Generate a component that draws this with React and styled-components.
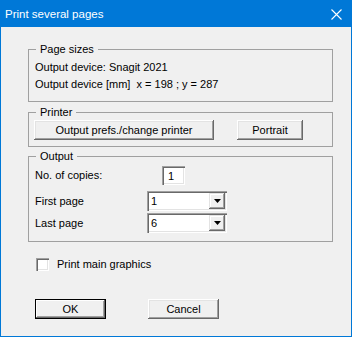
import styled, { createGlobalStyle } from 'styled-components';

const GlobalStyle = createGlobalStyle`
    html, body {
        margin: 0;
        padding: 0;
        background: #f0f0f0;
    }
    body {
        font-family: 'Liberation Sans', Arial, sans-serif;
        font-size: 11px;
        color: #000;
    }
`;

const Window = styled.div`
    width: 352px;
    height: 337px;
    box-sizing: border-box;
    border: 1px solid #0078d7;
    border-top: none;
    background: #f0f0f0;
    display: flex;
    flex-direction: column;
`;

const TitleBar = styled.div`
    height: 27px;
    flex-shrink: 0;
    background: #0078d7;
    display: flex;
    align-items: center;
    justify-content: space-between;
    padding-left: 4px;
`;

const Title = styled.div`
    color: #fff;
    font-size: 11.5px;
    line-height: 14px;
    padding-top: 1px;
`;

const CloseIcon = styled.svg`
    width: 11px;
    height: 11px;
    margin-right: 9px;
    margin-top: 1px;
`;

const Content = styled.div`
    padding: 16px 0 0 27px;
    display: flex;
    flex-direction: column;
`;

const Group = styled.fieldset`
    margin: ${p => p.$top || 0}px 0 0 0;
    padding: 0;
    width: 305px;
    min-width: 0;
    box-sizing: border-box;
    border: 1px solid #a0a0a0;
`;

const Legend = styled.legend`
    margin-left: 7px;
    padding: 0 4px;
    font-size: 11px;
    line-height: 13px;
`;

const TextBlock = styled.div`
    padding: 3px 0 8px 6px;
    line-height: 17px;
    white-space: pre;
`;

const ButtonRow = styled.div`
    display: flex;
    gap: 23px;
    padding: 1px 0 6px 5px;
`;

const Button = styled.button`
    width: ${p => p.$w}px;
    height: 20px;
    margin: 0;
    padding: 0;
    font-family: 'Liberation Sans', Arial, sans-serif;
    font-size: 11px;
    color: #000;
    background: #f0f0f0;
    border: none;
    box-sizing: border-box;
    box-shadow: ${p => p.$default
        ? 'inset 0 0 0 1px #000, inset -2px -2px 0 #696969, inset 2px 2px 0 #fff, inset -3px -3px 0 #a0a0a0'
        : 'inset -1px -1px 0 #696969, inset 1px 1px 0 #fff, inset -2px -2px 0 #a0a0a0, inset 2px 2px 0 #e3e3e3'};
`;

const OutputBody = styled.div`
    padding: 3px 0 8px 6px;
    display: flex;
    flex-direction: column;
`;

const FieldRow = styled.div`
    display: flex;
    align-items: center;
    margin-bottom: ${p => p.$after || 0}px;
`;

const Label = styled.div`
    width: 112px;
    line-height: 13px;
`;

const Sunken = styled.div`
    box-sizing: border-box;
    background: #fff;
    box-shadow: inset 1px 1px 0 #a0a0a0, inset 2px 2px 0 #696969, inset -1px -1px 0 #fff, inset -2px -2px 0 #e3e3e3;
    display: flex;
    align-items: center;
`;

const CopiesBox = styled(Sunken)`
    width: 23px;
    height: 19px;
    margin-left: 15px;
    padding-left: 6px;
`;

const Combo = styled(Sunken)`
    width: 80px;
    height: 20px;
    padding: 2px 2px 2px 4px;
    justify-content: space-between;
`;

const ComboArrow = styled.div`
    width: 16px;
    height: 16px;
    box-sizing: border-box;
    background: #f0f0f0;
    box-shadow: inset -1px -1px 0 #696969, inset 1px 1px 0 #e3e3e3, inset -2px -2px 0 #a0a0a0, inset 2px 2px 0 #fff;
    display: flex;
    align-items: center;
    justify-content: center;
`;

const CheckRow = styled.label`
    display: flex;
    align-items: center;
    gap: 8px;
    margin: 16px 0 0 8px;
    line-height: 13px;
`;

const CheckBox = styled(Sunken)`
    width: 13px;
    height: 13px;
`;

const Footer = styled.div`
    display: flex;
    gap: 42px;
    margin: 28px 0 0 7px;
`;

function Select({ value }) {
    return (
        <Combo>
            <span>{value}</span>
            <ComboArrow>
                <svg width="7" height="4" viewBox="0 0 7 4">
                    <polygon points="0,0 7,0 3.5,4" fill="#000" />
                </svg>
            </ComboArrow>
        </Combo>
    );
}

export default function App() {
    return (
        <>
            <GlobalStyle />
            <Window>
                <TitleBar>
                    <Title>Print several pages</Title>
                    <CloseIcon viewBox="0 0 11 11">
                        <path d="M0.5 0.5 L10.5 10.5 M10.5 0.5 L0.5 10.5" stroke="#fff" strokeWidth="1.1" />
                    </CloseIcon>
                </TitleBar>
                <Content>
                    <Group>
                        <Legend>Page sizes</Legend>
                        <TextBlock>
                            <div>Output device: Snagit 2021</div>
                            <div>Output device [mm]  x = 198 ; y = 287</div>
                        </TextBlock>
                    </Group>
                    <Group $top={4}>
                        <Legend>Printer</Legend>
                        <ButtonRow>
                            <Button $w={180}>Output prefs./change printer</Button>
                            <Button $w={66}>Portrait</Button>
                        </ButtonRow>
                    </Group>
                    <Group $top={3}>
                        <Legend>Output</Legend>
                        <OutputBody>
                            <FieldRow $after={6}>
                                <Label>No. of copies:</Label>
                                <CopiesBox>1</CopiesBox>
                            </FieldRow>
                            <FieldRow $after={2}>
                                <Label>First page</Label>
                                <Select value="1" />
                            </FieldRow>
                            <FieldRow>
                                <Label>Last page</Label>
                                <Select value="6" />
                            </FieldRow>
                        </OutputBody>
                    </Group>
                    <CheckRow>
                        <CheckBox />
                        <span>Print main graphics</span>
                    </CheckRow>
                    <Footer>
                        <Button $w={71} $default>OK</Button>
                        <Button $w={71}>Cancel</Button>
                    </Footer>
                </Content>
            </Window>
        </>
    );
}
